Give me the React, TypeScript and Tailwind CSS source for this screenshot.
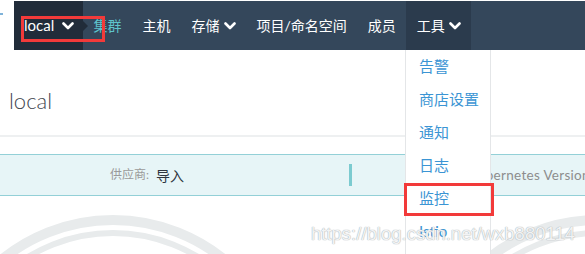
const NAV_ITEMS = ['集群', '主机', '存储', '项目/命名空间', '成员'];
const TOOLS = ['告警', '商店设置', '通知', '日志', '监控', 'Istio'];

const FONT = "font-['Lato','Noto_Sans_CJK_SC',sans-serif]";

function Chevron() {
  return (
    <svg width="12" height="8" viewBox="0 0 12 8" className="shrink-0">
      <polyline points="1.5,1.5 6,6 10.5,1.5" fill="none" stroke="white" strokeWidth="2.6" strokeLinecap="round" strokeLinejoin="round" />
    </svg>
  );
}

export default function App() {
  return (
    <div className={`relative h-[254px] w-[585px] overflow-hidden bg-white ${FONT}`}>
      {/* top bar */}
      <header className="mt-px flex h-[49px]">
        <div className="relative w-[14px] shrink-0 bg-white">
          <span className="absolute left-0 top-[12px] h-[2px] w-[3px] bg-[#7fb3d9]" />
        </div>
        <div className="relative flex w-[69px] shrink-0 items-center gap-[8px] bg-[#212c3a] pl-[10px]">
          <span className="text-[15px] leading-none text-white">local</span>
          <Chevron />
          <span className="absolute -right-[5px] top-1/2 -mt-[5px] h-0 w-0 border-y-[5px] border-l-[5px] border-y-transparent border-l-[#212c3a]" />
        </div>
        <nav className="flex flex-1 items-center bg-[#34475b]">
          {NAV_ITEMS.map((item, i) => (
            <div
              key={item}
              className={`flex h-full shrink-0 items-center gap-[4px] px-[10.5px] text-[14px] ${i === 0 ? 'text-[#5ec4cc]' : 'text-white'}`}
            >
              <span>{item}</span>
              {item === '存储' && <Chevron />}
            </div>
          ))}
          <div className="flex h-full shrink-0 items-center gap-[4px] bg-[#2b3b4d] px-[10.5px] text-[14px] text-white">
            <span>工具</span>
            <Chevron />
          </div>
        </nav>
      </header>

      {/* page title */}
      <div className="h-[85px] pl-[9px] pt-[38px]">
        <h1 className="text-[22px] font-light leading-[26px] text-[#3f4650]">local</h1>
      </div>
      <div className="h-[2px] bg-[#eef0f1]" />

      {/* info band */}
      <div className="mt-[17px] flex h-[42px] items-center border-y border-[#93d0d7] bg-[#e7f5f7]">
        <div className="flex w-[294px] shrink-0 items-center justify-center">
          <span className="text-[12px] text-[#9a9a9a]">供应商:</span>
          <span className="ml-[7px] text-[14px] text-[#2d3540]">导入</span>
        </div>
        <span className="ml-[55px] h-[22px] w-[3px] shrink-0 bg-[#7ccbd0]" />
        <span className="ml-[117px] shrink-0 whitespace-nowrap text-[13.5px] tracking-[0.3px] text-[#8d8d8d]">Kubernetes Version: v1.17.4</span>
      </div>

      {/* background rings */}
      <svg className="absolute left-0 top-0" width="585" height="254">
        <circle cx="113" cy="396" r="176" fill="none" stroke="#e8ebec" strokeWidth="10" />
        <circle cx="113" cy="396" r="163" fill="none" stroke="#e8ebec" strokeWidth="6" />
        <circle cx="598" cy="396" r="176" fill="none" stroke="#e8ebec" strokeWidth="10" />
        <circle cx="598" cy="396" r="163" fill="none" stroke="#e8ebec" strokeWidth="6" />
      </svg>

      {/* tools dropdown */}
      <ul className="absolute left-[405px] top-[50px] h-[220px] w-[86px] border-x border-[#e4e6e8] bg-white">
        {TOOLS.map(t => (
          <li key={t} className="flex h-[33px] items-center pl-[13px] text-[15px] text-[#3b95d4]">
            {t}
          </li>
        ))}
      </ul>

      {/* highlight boxes */}
      <div className="absolute left-[21px] top-[16px] h-[26px] w-[84px] border-[3px] border-[#f23a3a]" />
      <div className="absolute left-[404px] top-[183px] h-[33px] w-[90px] border-[3px] border-[#f23a3a]" />

      {/* watermark */}
      <div className="absolute left-[311px] top-[220px] whitespace-nowrap font-['Liberation_Sans',Arial,sans-serif] text-[18.5px] text-white/85 [text-shadow:0_0_1px_#a9b0b4,0_0_1px_#a9b0b4]">
        https://blog.csdn.net/wxb880114
      </div>
    </div>
  );
}
